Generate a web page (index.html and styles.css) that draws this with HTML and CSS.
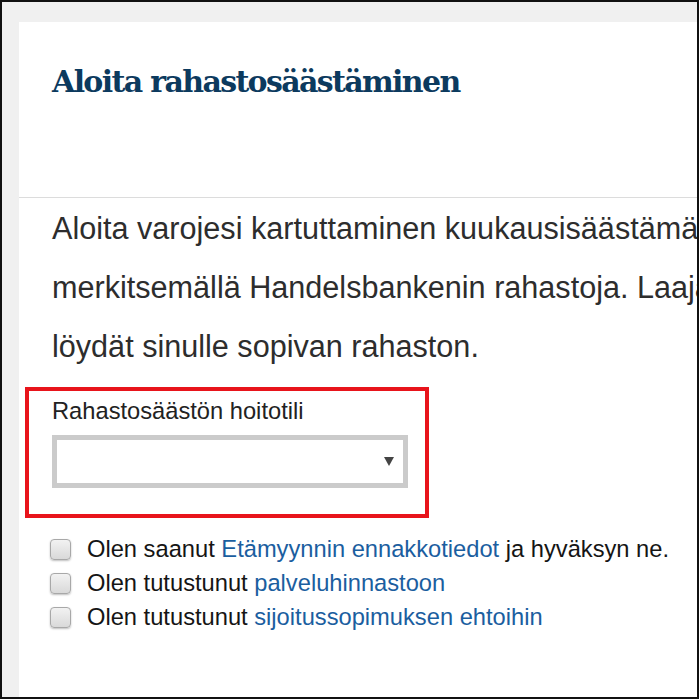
FILE: index.html
```html
<!DOCTYPE html>
<html lang="fi">
<head>
    <meta charset="UTF-8">
    <meta name="viewport" content="width=device-width, initial-scale=1.0">
    <title>Aloita rahastosäästäminen</title>
    <link rel="stylesheet" href="styles.css">
</head>
<body>
    <div class="frame">
        <div class="card">
            <!-- Header -->
            <div class="card-header">
                <h1 class="title">Aloita rahastosäästäminen</h1>
            </div>

            <!-- Content -->
            <div class="card-body">
                <p class="intro">Aloita varojesi kartuttaminen kuukausisäästämällä tai<br>merkitsemällä Handelsbankenin rahastoja. Laajasta valikoimasta<br>löydät sinulle sopivan rahaston.</p>

                <div class="field highlight">
                    <label class="field-label" for="account">Rahastosäästön hoitotili</label>
                    <div class="select-wrap">
                        <select id="account" class="select">
                            <option></option>
                        </select>
                    </div>
                </div>

                <ul class="terms">
                    <li>
                        <label class="term">
                            <input type="checkbox" class="check">
                            <span>Olen saanut <a href="#">Etämyynnin ennakkotiedot</a> ja hyväksyn ne.</span>
                        </label>
                    </li>
                    <li>
                        <label class="term">
                            <input type="checkbox" class="check">
                            <span>Olen tutustunut <a href="#">palveluhinnastoon</a></span>
                        </label>
                    </li>
                    <li>
                        <label class="term">
                            <input type="checkbox" class="check">
                            <span>Olen tutustunut <a href="#">sijoitussopimuksen ehtoihin</a></span>
                        </label>
                    </li>
                </ul>
            </div>
        </div>
    </div>
</body>
</html>
```

FILE: styles.css
```css
body {
    font-family: "Liberation Sans", Arial, sans-serif;
    margin: 0;
    padding: 0;
    background-color: #ffffff;
}
.frame {
    width: 699px;
    height: 699px;
    box-sizing: border-box;
    border: 2px solid #111;
    background-color: #f0f0f0;
    padding: 20px 0 0 17px;
    overflow: hidden;
}
.card {
    width: 1000px;
    min-height: 700px;
    background-color: #fff;
}
.card-header {
    height: 176px;
    box-sizing: border-box;
    padding: 43px 33px 0;
    border-bottom: 1px solid #dcdcdc;
}
.title {
    margin: 0;
    font-family: "DejaVu Serif", Georgia, serif;
    font-size: 30px;
    line-height: 34px;
    font-weight: bold;
    letter-spacing: -1.65px;
    color: #0c3a5e;
}
.card-body {
    padding: 1px 33px 0;
}
.intro {
    margin: 0;
    font-size: 30.6px;
    line-height: 59px;
    color: #2d2d2d;
    white-space: nowrap;
}

/* Highlighted form field */
.field {
    margin: 11px 0 0 -27px;
    width: 404px;
    box-sizing: border-box;
    padding: 6px 0 26px 23px;
}
.highlight {
    border: 4px solid #e8141b;
}
.field-label {
    display: block;
    font-size: 23.7px;
    line-height: 28px;
    color: #222;
}
.select-wrap {
    position: relative;
    width: 356px;
    margin-top: 10px;
}
.select {
    display: block;
    width: 100%;
    height: 53px;
    box-sizing: border-box;
    border: 5px solid #cbcbcb;
    border-radius: 0;
    background-color: #fff;
    appearance: none;
    -webkit-appearance: none;
    font-family: inherit;
    font-size: 20px;
}
.select-wrap::after {
    content: "";
    position: absolute;
    right: 14px;
    top: 22px;
    border-left: 5.5px solid transparent;
    border-right: 5.5px solid transparent;
    border-top: 9px solid #444;
    pointer-events: none;
}

/* Terms checkboxes */
.terms {
    list-style: none;
    margin: 14px 0 0;
    padding: 0;
}
.term {
    display: flex;
    align-items: center;
    gap: 16px;
    font-size: 23.7px;
    line-height: 34px;
    color: #151515;
    cursor: pointer;
}
.term a {
    color: #1b5e9f;
    text-decoration: none;
}
.check {
    appearance: none;
    -webkit-appearance: none;
    width: 21px;
    height: 21px;
    margin: 0 0 0 -2px;
    box-sizing: border-box;
    border: 1px solid #a8a8a8;
    border-radius: 4px;
    background: linear-gradient(#f2f2f2, #d9d9d9);
    box-shadow: 0 1px 2px rgba(0, 0, 0, 0.25);
    flex-shrink: 0;
}
```
